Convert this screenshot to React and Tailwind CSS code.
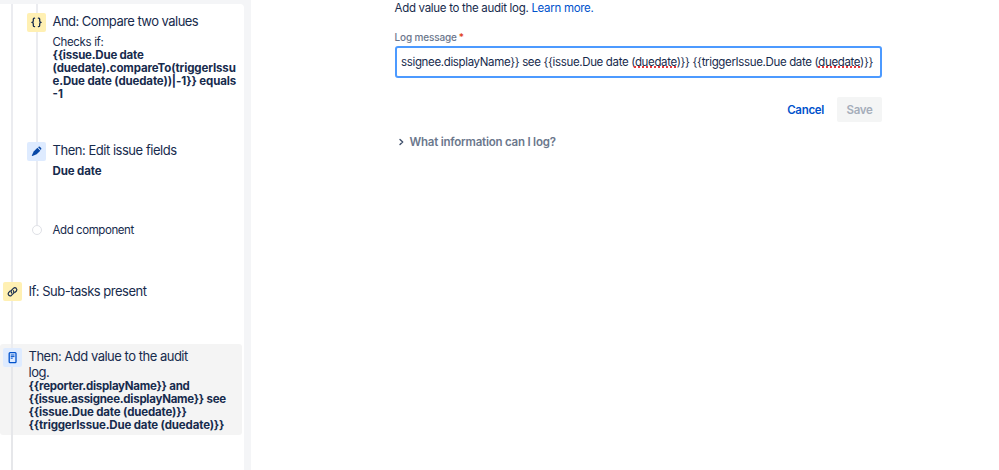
import React from 'react'

const BracesIcon = () => (
  <svg width="19" height="19" viewBox="0 0 19 19" fill="none" stroke="#172b4d" strokeWidth="1.3" strokeLinecap="round" strokeLinejoin="round">
    <path d="M7.6 5.2H7.2Q6.3 5.2 6.3 6.2V8Q6.3 9.4 4.9 9.4Q6.3 9.4 6.3 10.8V12.6Q6.3 13.6 7.2 13.6H7.6" />
    <path d="M11.4 5.2H11.8Q12.7 5.2 12.7 6.2V8Q12.7 9.4 14.1 9.4Q12.7 9.4 12.7 10.8V12.6Q12.7 13.6 11.8 13.6H11.4" />
  </svg>
)

const PencilIcon = () => (
  <svg width="19" height="19" viewBox="0 0 19 19" fill="#0747a6">
    <path d="M6.7 9.5L10.4 5.8L13.3 8.7L9.6 12.3L6.6 13.6L5.3 14.1Q4.7 14.2 4.9 13.5L5.4 12.2Z" />
    <path d="M11.1 5.2L11.6 4.7Q12.3 4.3 12.8 4.8L14.1 6.1Q14.6 6.6 14.2 7.3L13.8 7.9Z" />
  </svg>
)

const LinkIcon = () => (
  <svg width="19" height="19" viewBox="0 0 19 19" fill="none" stroke="#172b4d" strokeWidth="1.2" strokeLinecap="round">
    <path d="M8.7 11Q7.4 9.5 8.6 8.2L10.6 6.2Q11.9 5.2 13.2 6.3Q14.5 7.6 13.4 9L11.7 10.7" />
    <path d="M10.3 8.6Q11.6 10.1 10.4 11.4L8.4 13.4Q7.1 14.4 5.8 13.3Q4.5 12 5.6 10.6L7.3 8.9" />
  </svg>
)

const LogIcon = () => (
  <svg width="19" height="19" viewBox="0 0 19 19" fill="none" stroke="#0052cc" strokeLinecap="round">
    <rect x="6.2" y="4.6" width="6.8" height="10" rx="0.9" strokeWidth="1.3" />
    <path d="M8.1 7H11.1M8.1 8.6H11.1M8.1 10.2H9.3" strokeWidth="1" />
  </svg>
)

const tones = {
  yellow: 'bg-[#fff0b3]',
  blue: 'bg-[#deebff]',
}

const Tile = ({ tone, children }) => (
  <span className={`relative h-[19px] w-[19px] shrink-0 rounded-[2px] ${tones[tone]}`}>{children}</span>
)

const Line = ({ className = '', children }) => (
  <span className={`block whitespace-nowrap ${className}`}>{children}</span>
)

const Misspelt = ({ children }) => (
  <span className="underline decoration-[#e5383b] decoration-dotted decoration-[1.5px] underline-offset-[1px]">{children}</span>
)

const Sidebar = () => (
  <aside className="h-full w-[251px] shrink-0 bg-[#f4f5f7] pt-1 pr-[7px]">
    <div className="relative h-full overflow-hidden rounded-tr-[4px] bg-white">
      <div className="relative h-[274px] pl-[27px] pt-[9px]">
        <span className="absolute left-[36px] top-0 h-[221px] w-[2px] bg-[#ebecf0]" />
        <div className="flex h-[129px] gap-[6.5px]">
          <Tile tone="yellow"><BracesIcon /></Tile>
          <div>
            <Line className="text-[13px] leading-[16px] tracking-[-0.54px]">And: Compare two values</Line>
            <div className="mt-[7px] text-[11.5px] leading-[12.9px]">
              <Line className="tracking-[-0.35px]">Checks if:</Line>
              <div className="font-bold">
                <Line className="tracking-[-0.22px]">{'{{issue.Due date'}</Line>
                <Line className="tracking-[-0.12px]">(duedate).compareTo(triggerIssu</Line>
                <Line className="tracking-[-0.14px]">e.Due date (duedate))|-1{'}}'} equals</Line>
                <Line>-1</Line>
              </div>
            </div>
          </div>
        </div>
        <div className="flex h-[79px] gap-[6.5px]">
          <Tile tone="blue"><PencilIcon /></Tile>
          <div>
            <Line className="text-[13px] leading-[16px] tracking-[-0.47px]">Then: Edit issue fields</Line>
            <Line className="mt-[7px] text-[11.5px] font-bold leading-[13px] tracking-[-0.12px]">Due date</Line>
          </div>
        </div>
        <div className="flex items-center pl-[5px]">
          <span className="relative h-[10px] w-[10px] rounded-full border-[1.5px] border-[#dfe1e6] bg-white" />
          <Line className="ml-[10.5px] text-[11.5px] leading-[18px] tracking-[-0.42px]">Add component</Line>
        </div>
      </div>

      <div className="flex h-[66px] gap-[6.5px] pl-[3px] pt-[4px]">
        <Tile tone="yellow"><LinkIcon /></Tile>
        <Line className="text-[13px] leading-[18px] tracking-[-0.5px]">If: Sub-tasks present</Line>
      </div>

      <div className="flex h-[91px] w-[241.5px] gap-[6.5px] rounded-[3px] bg-[#f4f4f4] pl-[3px] pt-[4px]">
        <Tile tone="blue"><LogIcon /></Tile>
        <div>
          <div className="text-[13px] leading-[16px] tracking-[-0.49px]">
            <Line>Then: Add value to the audit</Line>
            <Line>log.</Line>
          </div>
          <div className="text-[11.5px] font-bold leading-[13px]">
            <Line className="tracking-[-0.25px]">{'{{reporter.displayName}} and'}</Line>
            <Line className="tracking-[-0.26px]">{'{{issue.assignee.displayName}} see'}</Line>
            <Line className="tracking-[-0.16px]">{'{{issue.Due date (duedate)}}'}</Line>
            <Line className="tracking-[-0.15px]">{'{{triggerIssue.Due date (duedate)}}'}</Line>
          </div>
        </div>
      </div>

      {/* outer branch rail, split around the icons that sit on it */}
      <span className="absolute left-[11px] top-0 h-[278px] w-[2px] bg-[#ebecf0]" />
      <span className="absolute left-[11px] top-[297px] h-[47px] w-[2px] bg-[#ebecf0]" />
      <span className="absolute bottom-0 left-[11px] top-[363px] w-[2px] bg-[#e6e7ea]" />
    </div>
  </aside>
)

const LogForm = () => (
  <main className="ml-[143.5px] w-[487.5px]">
    <p className="whitespace-nowrap pt-px text-[11.5px] leading-[15px] tracking-[-0.3px]">
      Add value to the audit log. <a className="text-[#0052cc]">Learn more.</a>
    </p>
    <div className="mt-[14px] flex text-[10px] font-medium leading-[14px] tracking-[-0.15px] text-[#6b778c]">
      <span>Log message</span>
      <span className="ml-[2px] text-[#de350b]">*</span>
    </div>
    <div className="mt-[2px] flex h-[32px] items-center whitespace-nowrap rounded-[3px] border-2 border-[#4c9aff] pl-[4.5px] pt-px text-[11.5px] tracking-[-0.35px]">
      <span>
        {'ssignee.displayName}} see {{issue.Due date ('}
        <Misspelt>duedate</Misspelt>
        {')}} {{triggerIssue.Due date ('}
        <Misspelt>duedate</Misspelt>
        {')}}'}
      </span>
    </div>
    <div className="mt-[19px] flex items-center justify-end gap-[13px] text-[11.5px] font-semibold tracking-[-0.3px]">
      <button className="pt-[2px] text-[#0052cc]">Cancel</button>
      <button className="h-[25px] w-[45px] rounded-[2px] bg-[#f4f5f5] pt-[2px] text-[#a5adba]" disabled>Save</button>
    </div>
    <div className="mt-[12px] flex items-center text-[11.5px] font-semibold leading-[16px] tracking-[-0.22px] text-[#6b778c]">
      <svg className="ml-[3px] mr-[5px]" width="7" height="10" viewBox="0 0 7 10" fill="none" stroke="#42526e" strokeWidth="1.4" strokeLinecap="round" strokeLinejoin="round">
        <path d="M2 2.4L4.7 5L2 7.6" />
      </svg>
      <span className="whitespace-nowrap">What information can I log?</span>
    </div>
  </main>
)

export default function App() {
  return (
    <div className="flex h-[470px] w-[999px] overflow-hidden bg-white font-['Inter','Liberation_Sans',sans-serif] text-[#172b4d]">
      <Sidebar />
      <LogForm />
    </div>
  )
}
